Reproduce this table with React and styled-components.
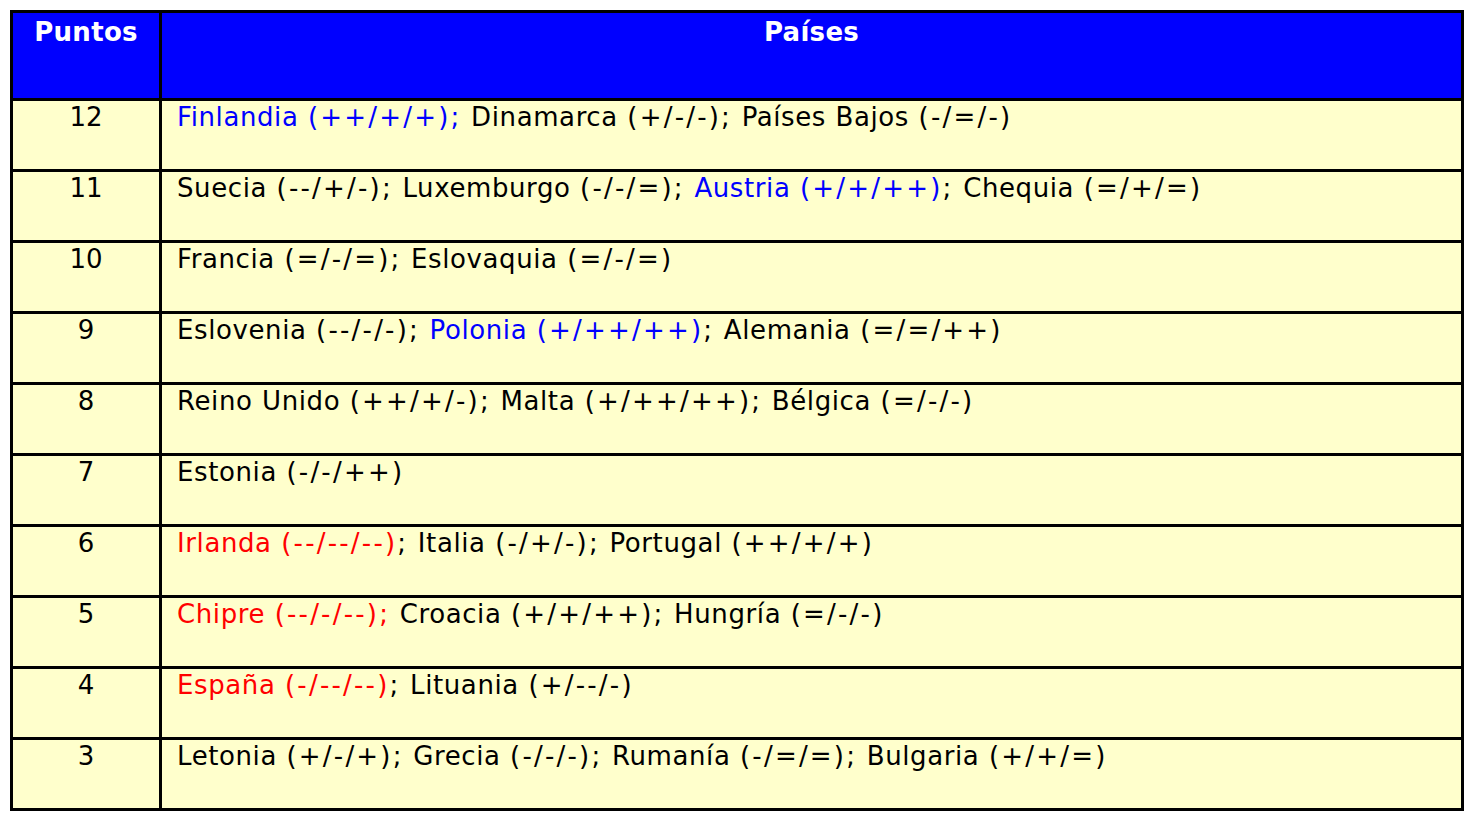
import React from "react";
import styled, { createGlobalStyle } from "styled-components";

const Global = createGlobalStyle`
  html, body { margin: 0; padding: 0; background: #ffffff; }
  body { padding: 10px; font-family: "DejaVu Sans", Verdana, sans-serif; }
`;

const Table = styled.div`
  width: 1454px;
  box-sizing: border-box;
  display: grid;
  grid-template-columns: 146px 1fr;
  grid-template-rows: 85px;
  grid-auto-rows: 68px;
  gap: 3px;
  padding: 3px;
  background: #000000;
`;

const HeadCell = styled.div`
  background: #0000ff;
  color: #ffffff;
  font-weight: bold;
  font-size: 26px;
  letter-spacing: 0.3px;
  text-align: center;
  padding-top: 4px;
  line-height: 30px;
`;

const Cell = styled.div`
  background: #ffffcc;
  color: #000000;
  font-size: 26px;
  line-height: 30px;
  padding-top: 1px;
  padding-left: ${(p) => (p.$num ? "0" : "15px")};
  text-align: ${(p) => (p.$num ? "center" : "left")};
  white-space: nowrap;
  letter-spacing: ${(p) => (p.$num ? "0" : "0.6px")};
  word-spacing: 0.7px;
`;

const Tone = styled.span`
  color: ${(p) => (p.$tone === "blue" ? "#0000ff" : p.$tone === "red" ? "#ff0000" : "#000000")};
`;

const Punct = styled.span`
  letter-spacing: 2.2px;
`;

const rows = [
  ["12", [["blue", "Finlandia (++/+/+);"], ["", " Dinamarca (+/-/-); Países Bajos (-/=/-)"]]],
  ["11", [["", "Suecia (--/+/-); Luxemburgo (-/-/=); "], ["blue", "Austria (+/+/++)"], ["", "; Chequia (=/+/=)"]]],
  ["10", [["", "Francia (=/-/=); Eslovaquia (=/-/=)"]]],
  ["9", [["", "Eslovenia (--/-/-); "], ["blue", "Polonia (+/++/++)"], ["", "; Alemania (=/=/++)"]]],
  ["8", [["", "Reino Unido (++/+/-); Malta (+/++/++); Bélgica (=/-/-)"]]],
  ["7", [["", "Estonia (-/-/++)"]]],
  ["6", [["red", "Irlanda (--/--/--)"], ["", "; Italia (-/+/-); Portugal (++/+/+)"]]],
  ["5", [["red", "Chipre (--/-/--);"], ["", " Croacia (+/+/++); Hungría (=/-/-)"]]],
  ["4", [["red", "España (-/--/--)"], ["", "; Lituania (+/--/-)"]]],
  ["3", [["", "Letonia (+/-/+); Grecia (-/-/-); Rumanía (-/=/=); Bulgaria (+/+/=)"]]],
];

function Spaced({ text }) {
  const pieces = text.split(/([()+\-/=;]+)/);
  return pieces.map((p, i) =>
    i % 2 === 1 ? <Punct key={i}>{p}</Punct> : <React.Fragment key={i}>{p}</React.Fragment>
  );
}

export default function App() {
  return (
    <>
      <Global />
      <Table>
        <HeadCell>Puntos</HeadCell>
        <HeadCell>Países</HeadCell>
        {rows.map(([n, parts]) => (
          <React.Fragment key={n}>
            <Cell $num>{n}</Cell>
            <Cell>
              {parts.map(([tone, text], i) => (
                <Tone key={i} $tone={tone}>
                  <Spaced text={text} />
                </Tone>
              ))}
            </Cell>
          </React.Fragment>
        ))}
      </Table>
    </>
  );
}
